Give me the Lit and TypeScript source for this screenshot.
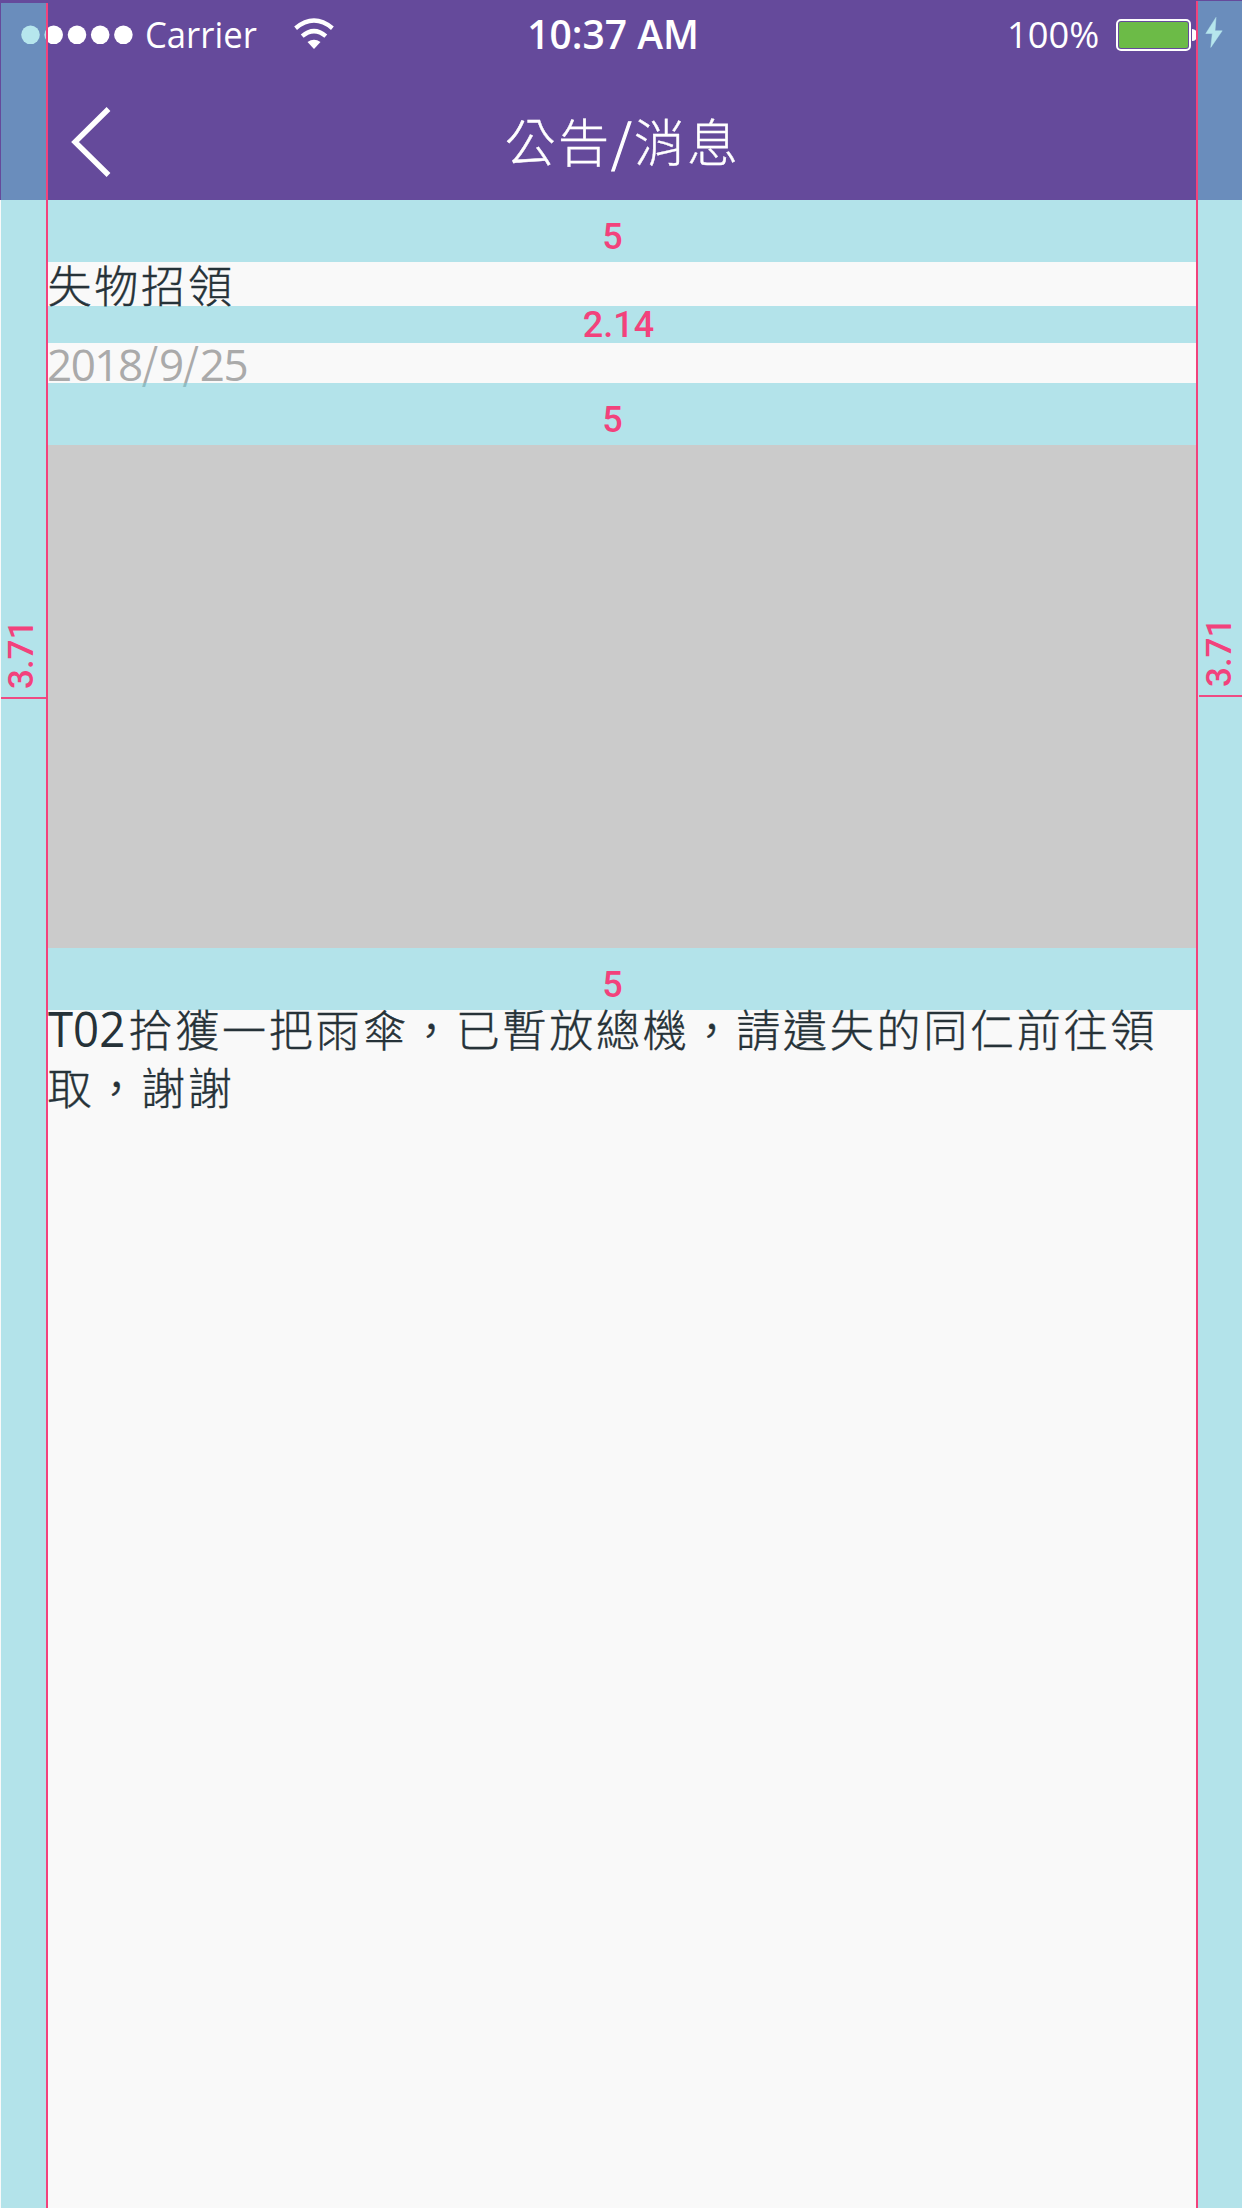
import { LitElement, html, css, svg } from "lit";
import { customElement, property } from "lit/decorators.js";

@customElement("status-bar")
class StatusBar extends LitElement {
  static styles = css`
    :host {
      display: grid;
      grid-template-columns: 1fr auto 1fr;
      height: 70px;
      color: #fff;
      font-family: "Open Sans", "Noto Sans", sans-serif;
      white-space: nowrap;
    }
    .side { display: flex; align-items: flex-start; }
    .side > * { flex: none; }
    .left { padding-left: 21px; }
    .right { justify-content: flex-end; padding-right: 19px; }
    .dots { display: block; margin-top: 25px; }
    .carrier {
      margin: 9px 0 0 11px;
      width: 112px;
      font-size: 37px;
      line-height: 50px;
      transform: scaleX(0.937);
      transform-origin: 0 0;
    }
    .wifi { display: block; margin: 18px 0 0 37px; }
    .time {
      margin: 9px 16px 0 0;
      font-size: 39px;
      line-height: 50px;
      font-weight: 600;
    }
    .percent {
      margin: 9px 18px 0 0;
      width: 91px;
      font-size: 37px;
      line-height: 50px;
      transform: scaleX(0.98);
      transform-origin: 0 0;
    }
    .battery { display: block; margin-top: 19px; }
    .bolt { display: block; margin: 17px 0 0 7px; }
  `;

  render() {
    return html`
      <div class="side left">
        <svg class="dots" width="113" height="20" viewBox="0 0 113 20" fill="#fff">
          ${[9.5, 32.7, 56, 79.2, 102.4].map((x) => svg`<circle cx=${x} cy="9.8" r="9.3" />`)}
        </svg>
        <div class="carrier">Carrier</div>
        <svg class="wifi" width="40" height="32" viewBox="0 0 40 32" fill="none" stroke="#fff" stroke-width="4.4">
          <path d="M1.6 10.2Q20 -5 38.4 10.2" />
          <path d="M8.2 18.2Q20 8 31.8 18.2" />
          <path d="M13.5 24Q20 19.5 26.5 24L20 31Z" fill="#fff" stroke="none" />
        </svg>
      </div>
      <div class="time">10:37 AM</div>
      <div class="side right">
        <div class="percent">100%</div>
        <svg class="battery" width="82" height="32" viewBox="0 0 82 32">
          <rect x="1" y="1" width="73" height="30" rx="4" fill="none" stroke="#fff" stroke-width="2" />
          <rect x="3" y="3" width="69" height="26" rx="2" fill="#6cbb47" />
          <path d="M76 10Q81 10 81 16Q81 22 76 22Z" fill="#fff" />
        </svg>
        <svg class="bolt" width="18" height="31" viewBox="0 0 18 31">
          <path d="M11 0.4L0.8 16.5H7.3L5.8 30.4L17.2 13.8H10Z" fill="#fff" stroke="#fff" stroke-width="0.5" />
        </svg>
      </div>
    `;
  }
}

@customElement("nav-bar")
class NavBar extends LitElement {
  static styles = css`
    :host {
      display: grid;
      grid-template-columns: 1fr auto 1fr;
      height: 130px;
      color: #fff;
    }
    .back { display: block; margin: 37px 0 0 70.5px; }
    .title {
      margin: 30px 0 0 3px;
      font: 300 51px/80px "Noto Sans CJK TC", sans-serif;
      letter-spacing: 2.3px;
      -webkit-text-stroke: 0.4px currentColor;
    }
    .slash { -webkit-text-stroke: 1.2px currentColor; }
  `;

  render() {
    return html`
      <svg class="back" width="40" height="70" viewBox="0 0 40 70">
        <path d="M37.5 2L4 35L37.5 68" fill="none" stroke="#fff" stroke-width="5.4" />
      </svg>
      <div class="title" lang="zh-Hant">公告<span class="slash">/</span>消息</div>
    `;
  }
}

@customElement("gap-band")
class GapBand extends LitElement {
  @property() label = "";

  static styles = css`
    :host {
      display: block;
      position: relative;
      z-index: 1;
      flex: none;
      box-sizing: border-box;
      background: rgba(112, 206, 220, 0.51);
      color: #f2427c;
      font: 500 36px/42px Roboto, sans-serif;
    }
    .label { display: block; text-align: center; }
  `;

  render() {
    return html`<span class="label">${this.label}</span>`;
  }
}

@customElement("side-guide")
class SideGuide extends LitElement {
  @property() label = "";

  static styles = css`
    :host {
      display: flex;
      flex-direction: column;
      box-sizing: border-box;
      background: rgba(112, 206, 220, 0.51);
      color: #f2427c;
      font: 500 35px/42px Roboto, sans-serif;
    }
    .label {
      flex: none;
      display: flex;
      box-sizing: border-box;
      height: 694px;
      padding-top: 8px;
      writing-mode: vertical-rl;
      transform: rotate(180deg);
    }
    .rule { flex: none; height: 2px; background: #ee4b83; }
  `;

  render() {
    return html`<span class="label">${this.label}</span><div class="rule"></div>`;
  }
}

@customElement("app-root")
class AppRoot extends LitElement {
  static styles = css`
    :host {
      display: block;
      position: relative;
      width: 1242px;
      height: 2208px;
      overflow: hidden;
      background: #f9f9f9;
    }
    .header { height: 200px; background: #654a9b; }
    .content {
      display: flex;
      flex-direction: column;
      padding: 0 45px 0 48px;
      color: #263238;
      font-family: "Open Sans", "Noto Sans CJK TC", sans-serif;
      font-weight: 300;
    }
    .heading {
      height: 44px;
      margin-left: -0.5px;
      font-size: 44px;
      line-height: 49px;
      letter-spacing: 2.8px;
      -webkit-text-stroke: 0.4px currentColor;
    }
    .date {
      height: 40px;
      margin-left: -1px;
      color: #aaa;
      font-size: 44px;
      font-weight: 400;
      line-height: 43px;
      letter-spacing: -1.5px;
    }
    .slash {
      font-family: "Noto Sans CJK TC", sans-serif;
      font-size: 42px;
      line-height: 0;
      letter-spacing: 0.8px;
      vertical-align: 2px;
    }
    .photo { height: 503px; background: #cbcbcb; }
    .text {
      margin: -7px 0 0 -0.5px;
      font-family: "Liberation Sans", "Noto Sans CJK TC", sans-serif;
      font-size: 44px;
      line-height: 58px;
      letter-spacing: 2.75px;
      white-space: nowrap;
      -webkit-text-stroke: 0.4px currentColor;
    }
    .latin {
      display: inline-block;
      width: 81px;
      font-family: "Open Sans", sans-serif;
      font-size: 49px;
      line-height: 0;
      font-weight: 400;
      letter-spacing: 0;
      transform: scaleX(0.93);
      transform-origin: 0 0;
      -webkit-text-stroke: 0;
    }
    .large { height: 62px; padding-top: 16px; padding-right: 20px; }
    .medium { height: 37px; padding-right: 8px; line-height: 39px; }
    .guide { position: absolute; z-index: 2; bottom: 0; }
    .guide-left { left: 1px; top: 3px; width: 47px; border-right: 2px solid #f2427c; }
    .guide-right { left: 1196px; top: 1px; width: 46px; padding-left: 1px; border-left: 2px solid #f2427c; }
  `;

  render() {
    return html`
      <div class="header">
        <status-bar></status-bar>
        <nav-bar></nav-bar>
      </div>
      <div class="content" lang="zh-Hant">
        <gap-band class="large" label="5"></gap-band>
        <div class="heading">失物招領</div>
        <gap-band class="medium" label="2.14"></gap-band>
        <div class="date">2018<span class="slash">/</span>9<span class="slash">/</span>25</div>
        <gap-band class="large" label="5"></gap-band>
        <div class="photo"></div>
        <gap-band class="large" label="5"></gap-band>
        <p class="text"><span class="latin">T02</span>拾獲一把雨傘，已暫放總機，請遺失的同仁前往領<br />取，謝謝</p>
      </div>
      <side-guide class="guide guide-left" label="3.71"></side-guide>
      <side-guide class="guide guide-right" label="3.71"></side-guide>
    `;
  }
}
